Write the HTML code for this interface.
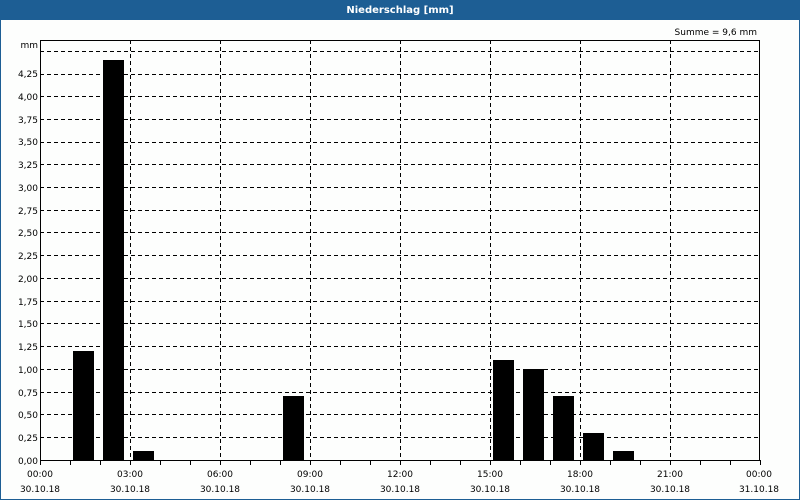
<!DOCTYPE html>
<html><head><meta charset="utf-8"><style>
html,body{margin:0;padding:0;background:#fff;}
svg{display:block;font-family:"DejaVu Sans","Liberation Sans",sans-serif;}
</style></head><body>
<svg width="800" height="500" xmlns="http://www.w3.org/2000/svg">
<rect x="0" y="0" width="800" height="500" fill="#1d5e94"/>
<rect x="1" y="20" width="798" height="479" fill="#fdfefd"/>
<text x="400" y="13" fill="#fff" font-size="10" font-weight="bold" text-anchor="middle">Niederschlag [mm]</text>
<text x="757" y="35" fill="#000" font-size="9" text-anchor="end">Summe = 9,6 mm</text>
<text x="38" y="48" font-size="9" text-anchor="end">mm</text>
<g stroke="#000" stroke-width="1" stroke-dasharray="4,3" fill="none">
<path d="M40 51.5H760M40 74.5H760M40 96.5H760M40 119.5H760M40 142.5H760M40 164.5H760M40 187.5H760M40 210.5H760M40 232.5H760M40 255.5H760M40 278.5H760M40 301.5H760M40 323.5H760M40 346.5H760M40 369.5H760M40 392.5H760M40 414.5H760M40 437.5H760"/>
<path d="M130.5 40V460M220.5 40V460M310.5 40V460M400.5 40V460M490.5 40V460M580.5 40V460M670.5 40V460"/>
</g>
<rect x="40.5" y="40.5" width="719" height="420" fill="none" stroke="#000"/>
<g stroke="#000">
<path d="M70.5 460v5M100.5 460v5M130.5 460v5M160.5 460v5M190.5 460v5M220.5 460v5M250.5 460v5M280.5 460v5M310.5 460v5M340.5 460v5M370.5 460v5M400.5 460v5M430.5 460v5M460.5 460v5M490.5 460v5M520.5 460v5M550.5 460v5M580.5 460v5M610.5 460v5M640.5 460v5M670.5 460v5M700.5 460v5M730.5 460v5M40.5 460v5M760.5 460v5"/>
</g>
<g fill="#000">
<rect x="73" y="351" width="21" height="109"/>
<rect x="103" y="60" width="21" height="400"/>
<rect x="133" y="451" width="21" height="9"/>
<rect x="283" y="396" width="21" height="64"/>
<rect x="493" y="360" width="21" height="100"/>
<rect x="523" y="369" width="21" height="91"/>
<rect x="553" y="396" width="21" height="64"/>
<rect x="583" y="433" width="21" height="27"/>
<rect x="613" y="451" width="21" height="9"/>
</g>
<g font-size="9" text-anchor="end" fill="#000">
<text x="38" y="77">4,25</text><text x="38" y="100">4,00</text><text x="38" y="123">3,75</text><text x="38" y="145">3,50</text><text x="38" y="168">3,25</text><text x="38" y="191">3,00</text><text x="38" y="214">2,75</text><text x="38" y="236">2,50</text><text x="38" y="259">2,25</text><text x="38" y="282">2,00</text><text x="38" y="305">1,75</text><text x="38" y="327">1,50</text><text x="38" y="350">1,25</text><text x="38" y="373">1,00</text><text x="38" y="396">0,75</text><text x="38" y="418">0,50</text><text x="38" y="441">0,25</text><text x="38" y="464">0,00</text>
</g>
<g font-size="9" text-anchor="middle" fill="#000">
<text x="40" y="477">00:00</text><text x="40" y="492">30.10.18</text>
<text x="130" y="477">03:00</text><text x="130" y="492">30.10.18</text>
<text x="220" y="477">06:00</text><text x="220" y="492">30.10.18</text>
<text x="310" y="477">09:00</text><text x="310" y="492">30.10.18</text>
<text x="400" y="477">12:00</text><text x="400" y="492">30.10.18</text>
<text x="490" y="477">15:00</text><text x="490" y="492">30.10.18</text>
<text x="580" y="477">18:00</text><text x="580" y="492">30.10.18</text>
<text x="670" y="477">21:00</text><text x="670" y="492">30.10.18</text>
<text x="759" y="477">00:00</text><text x="759" y="492">31.10.18</text>
</g>
</svg>
</body></html>
